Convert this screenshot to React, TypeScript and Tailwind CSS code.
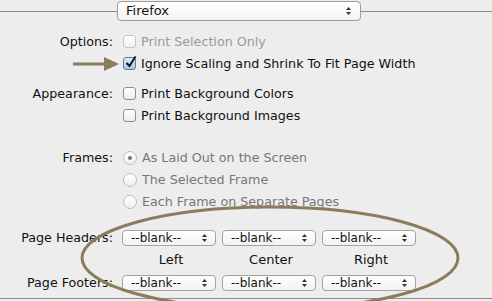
import React from 'react';

const Arrows = () => (
  <svg width="7" height="10" viewBox="0 0 7 10" className="shrink-0">
    <path d="M3.5 1 L6 4 L1 4 Z" fill="#333" />
    <path d="M3.5 9 L6 6 L1 6 Z" fill="#333" />
  </svg>
);

const Checkbox = ({ checked, disabled }: { checked?: boolean; disabled?: boolean }) => (
  <span
    className={
      'relative w-[13px] h-[13px] rounded-[3px] border shrink-0 ' +
      (checked
        ? 'border-[#5b7fa8] bg-gradient-to-b from-[#dfeaf7] to-[#a9c6e8]'
        : disabled
        ? 'border-[#c6c6c6] bg-gradient-to-b from-white to-[#f1f1f1]'
        : 'border-[#8f8f8f] bg-gradient-to-b from-white to-[#ececec]')
    }
  >
    {checked && (
      <svg width="13" height="13" viewBox="0 0 13 13" className="absolute left-[0px] top-[-3px]">
        <path d="M2.5 8 L5.5 11 L11.5 1.5" stroke="#111" strokeWidth="2" fill="none" />
      </svg>
    )}
  </span>
);

const Radio = ({ on }: { on?: boolean }) => (
  <span className="w-[14px] h-[14px] rounded-full border border-[#bdbdbd] bg-gradient-to-b from-white to-[#efefef] flex items-center justify-center shrink-0">
    {on && <span className="w-[4px] h-[4px] rounded-full bg-[#777]" />}
  </span>
);

const Select = () => (
  <div className="w-[94px] h-[16px] rounded-[4px] border border-[#a3a3a3] bg-gradient-to-b from-white to-[#f2f2f2] flex items-center justify-between pl-[8px] pr-[7px] text-[12px] text-[#111]">
    <span>--blank--</span>
    <Arrows />
  </div>
);

const Row = ({ label, children, className = '' }: { label?: string; children: React.ReactNode; className?: string }) => (
  <div className={'flex items-center h-[22px] ' + className}>
    <div className="w-[114px] pr-[1px] text-right text-[#111] whitespace-nowrap">{label}</div>
    <div className="flex items-center pl-[9px] gap-[5px] whitespace-nowrap">{children}</div>
  </div>
);

export default function App() {
  return (
    <div
      className="relative w-[492px] h-[301px] bg-[#ededed] overflow-hidden text-[12.7px]"
      style={{ fontFamily: '"DejaVu Sans", "Liberation Sans", sans-serif' }}
    >
      {/* top popup */}
      <div className="flex items-center pt-[1px] h-[21px]">
        <div className="w-[117px] h-px bg-[#8c8c8c]" />
        <div className="w-[244px] h-[20px] rounded-[4px] border border-[#9c9c9c] bg-gradient-to-b from-white to-[#f3f3f3] flex items-center justify-between pl-[8px] pr-[8px] text-[13px] text-[#111]">
          <span>Firefox</span>
          <Arrows />
        </div>
        <div className="flex-1 h-px bg-[#8c8c8c]" />
      </div>

      <Row label="Options:" className="mt-[10px]">
        <Checkbox disabled />
        <span className="text-[#9a9a9a]">Print Selection Only</span>
      </Row>
      <Row>
        <Checkbox checked />
        <span className="text-[#111]">Ignore Scaling and Shrink To Fit Page Width</span>
      </Row>

      <Row label="Appearance:" className="mt-[8px]">
        <Checkbox />
        <span className="text-[#111]">Print Background Colors</span>
      </Row>
      <Row>
        <Checkbox />
        <span className="text-[#111]">Print Background Images</span>
      </Row>

      <Row label="Frames:" className="mt-[20px]">
        <Radio on />
        <span className="text-[#777]">As Laid Out on the Screen</span>
      </Row>
      <Row>
        <Radio />
        <span className="text-[#777]">The Selected Frame</span>
      </Row>
      <Row>
        <Radio />
        <span className="text-[#777]">Each Frame on Separate Pages</span>
      </Row>

      <Row label="Page Headers:" className="mt-[14px]">
        <div className="flex gap-[6px] -ml-[1px]">
          <Select />
          <Select />
          <Select />
        </div>
      </Row>
      <div className="flex h-[22px] items-center pl-[121px] text-[13px] text-[#111]">
        <div className="w-[100px] text-center">Left</div>
        <div className="w-[100px] text-center">Center</div>
        <div className="w-[100px] text-center">Right</div>
      </div>
      <Row label="Page Footers:" className="mt-[1px]">
        <div className="flex gap-[6px] -ml-[1px]">
          <Select />
          <Select />
          <Select />
        </div>
      </Row>
      <div className="mt-[4px] h-px bg-[#8c8c8c]" />

      {/* annotation arrow */}
      <svg className="absolute left-0 top-0 pointer-events-none" width="492" height="301">
        <path d="M73 64 L106 64" stroke="#8a7c5c" strokeWidth="3" />
        <path d="M104 57 L119 64 L104 71 Z" fill="#8a7c5c" />
        <ellipse cx="270" cy="258" rx="188" ry="51" fill="none" stroke="#8a7c5c" strokeWidth="3" />
      </svg>
    </div>
  );
}
